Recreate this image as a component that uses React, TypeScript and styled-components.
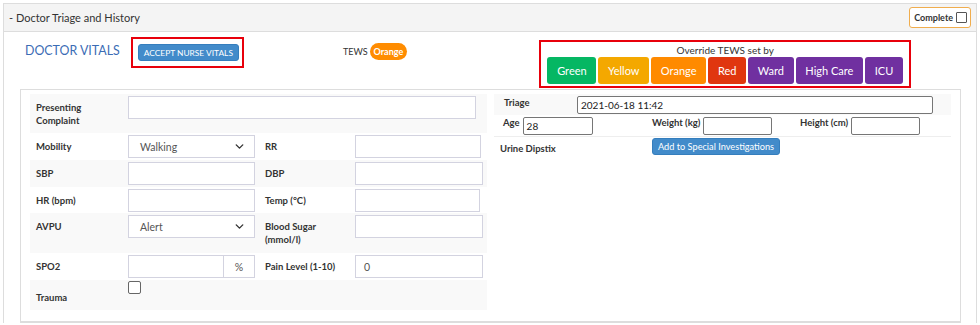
import * as React from 'react'
import styled, { createGlobalStyle } from 'styled-components'
import { ChevronDown } from 'lucide-react'

const GlobalStyle = createGlobalStyle`
  body {
    margin: 0;
    background: #fff;
    font-family: Lato, "Noto Sans", sans-serif;
    color: #333;
  }
`

const Panel = styled.div`
  margin: 3px 3px 0 3px;
  border: 1px solid #ddd;
  border-bottom: none;
`

const PanelHeader = styled.div`
  height: 27px;
  display: flex;
  align-items: center;
  justify-content: space-between;
  padding: 0 5px;
  background: #f4f4f4;
  border-bottom: 1px solid #ddd;
  font-size: 11px;
`

const CompleteButton = styled.label`
  display: flex;
  align-items: center;
  gap: 3px;
  height: 19px;
  padding: 0 3px 0 4px;
  border: 1px solid #f0ad4e;
  border-radius: 3px;
  background: #fff;
  font-size: 9px;
  font-weight: 700;
  color: #333;
`

const Box = styled.span`
  display: inline-block;
  width: 9px;
  height: 9px;
  border: 1px solid #555;
  border-radius: 1px;
  background: #fff;
`

const PanelBody = styled.div`
  padding: 0 15px 0 16px;
`

const TopRow = styled.div`
  height: 57px;
  display: flex;
  align-items: flex-start;
  & > * {
    flex-shrink: 0;
  }
`

const Title = styled.div`
  margin: 11px 0 0 5px;
  font-size: 12.4px;
  color: #3b6cb5;
  white-space: nowrap;
`

const Highlight = styled.div`
  margin: 5px 0 0 11px;
  border: 2px solid #e8000b;
  padding: 5px 3px 5px 5px;
`

const BlueButton = styled.button<{ $upper?: boolean }>`
  display: block;
  font-family: inherit;
  font-size: ${p => (p.$upper ? '8.4px' : '9.2px')};
  color: #fff;
  background: #428bca;
  border: 1px solid #357ebd;
  border-radius: 3px;
  height: 17px;
  padding: 0 5px;
  text-transform: ${p => (p.$upper ? 'uppercase' : 'none')};
  white-space: nowrap;
`

const Tews = styled.div`
  margin: 11px 0 0 99px;
  display: flex;
  align-items: center;
  gap: 2px;
  font-size: 9px;
`

const Badge = styled.span`
  background: #ff8c00;
  color: #fff;
  font-weight: 700;
  font-size: 9px;
  border-radius: 9px;
  padding: 0 4px;
  height: 17px;
  display: inline-flex;
  align-items: center;
`

const Override = styled.div`
  margin: 8px 50px 0 auto;
  border: 2px solid #e8000b;
  padding: 2px 6px 2px 6px;
  display: flex;
  flex-direction: column;
  align-items: center;
  gap: 1px;
  font-size: 10px;
  white-space: nowrap;
`

const TewsButtons = styled.div`
  display: flex;
  gap: 2px;
`

const TewsButton = styled.button<{ $bg: string }>`
  font-family: inherit;
  font-size: 11px;
  color: #fff;
  background: ${p => p.$bg};
  border: none;
  border-radius: 3px;
  height: 27px;
  padding: 0 9.7px;
  white-space: nowrap;
`

const Inner = styled.div`
  border: 1px solid #ddd;
  border-bottom-width: 2px;
  padding: 4px 9px 11px 9px;
  display: grid;
  grid-template-columns: 457px 1fr;
  column-gap: 7px;
  align-items: start;
`

const Row = styled.div<{ $stripe?: boolean; $h: number }>`
  display: grid;
  grid-template-columns: 98px 131px 96px 1fr;
  align-items: start;
  height: ${p => p.$h}px;
  background: ${p => (p.$stripe ? '#f9f9f9' : '#fff')};
`

const Label = styled.div<{ $top?: number }>`
  padding: ${p => p.$top ?? 7}px 6px 0 6px;
  font-size: 9.5px;
  font-weight: 700;
  line-height: 13px;
  color: #333;
`

const Cell = styled.div<{ $span?: number }>`
  padding-top: 2px;
  grid-column: span ${p => p.$span ?? 1};
`

const Input = styled.div<{ $w: number }>`
  box-sizing: border-box;
  width: ${p => p.$w}px;
  height: 23px;
  border: 1px solid #d3d3e0;
  background: #fff;
  display: flex;
  align-items: center;
  justify-content: space-between;
  padding: 0 8px 0 11px;
  font-size: 10.5px;
  color: #555;
`

const Group = styled.div`
  display: flex;
  width: 127px;
`

const Addon = styled.div`
  box-sizing: border-box;
  width: 31px;
  height: 23px;
  border: 1px solid #d3d3e0;
  border-left: none;
  display: flex;
  align-items: center;
  justify-content: center;
  font-size: 10.5px;
  color: #555;
`

const Check = styled.span`
  display: block;
  width: 11px;
  height: 11px;
  border: 1px solid #666;
  border-radius: 2px;
  margin-top: -1px;
  background: #fff;
`

const Side = styled.div`
  display: flex;
  flex-direction: column;
`

const TriageRow = styled.div`
  display: grid;
  grid-template-columns: 83px 1fr;
  background: #f9f9f9;
  height: 21px;
  padding-right: 18px;
  align-items: center;
`

const SideLabel = styled.span<{ $pad?: number }>`
  padding-left: ${p => p.$pad ?? 0}px;
  font-size: 9.5px;
  font-weight: 700;
  color: #333;
  white-space: nowrap;
`

const Field = styled.div<{ $w?: number }>`
  box-sizing: border-box;
  width: ${p => (p.$w ? `${p.$w}px` : '100%')};
  height: 18px;
  border: 1px solid #767676;
  border-radius: 2px;
  background: #fff;
  font-size: 10px;
  color: #222;
  padding: 0 3px;
  display: flex;
  align-items: center;
`

const MeasureRow = styled.div`
  display: grid;
  grid-template-columns: 158px 148px 1fr;
  height: 21px;
  border-bottom: 1px solid #eee;
  align-items: center;
`

const Measure = styled.div<{ $pad?: number }>`
  display: flex;
  align-items: flex-start;
  gap: 3px;
  padding-left: ${p => p.$pad ?? 0}px;
`

const DipRow = styled.div`
  display: grid;
  grid-template-columns: 158px 1fr;
  padding-top: 1px;
  align-items: start;
  & > span {
    padding-top: 5px;
  }
`

const tewsLevels = [
  { name: 'Green', bg: '#05b763' },
  { name: 'Yellow', bg: '#f4a800' },
  { name: 'Orange', bg: '#ff8a00' },
  { name: 'Red', bg: '#e0360f' },
  { name: 'Ward', bg: '#7030a0' },
  { name: 'High Care', bg: '#7030a0' },
  { name: 'ICU', bg: '#7030a0' },
]

const Chevron = () => <ChevronDown size={13} strokeWidth={2.6} color="#333" />

export default function App() {
  return (
    <>
      <GlobalStyle />
      <Panel>
        <PanelHeader>
          <span>- Doctor Triage and History</span>
          <CompleteButton>
            Complete <Box />
          </CompleteButton>
        </PanelHeader>
        <PanelBody>
          <TopRow>
            <Title>DOCTOR VITALS</Title>
            <Highlight>
              <BlueButton $upper>Accept Nurse Vitals</BlueButton>
            </Highlight>
            <Tews>
              TEWS <Badge>Orange</Badge>
            </Tews>
            <Override>
              <span>Override TEWS set by</span>
              <TewsButtons>
                {tewsLevels.map(level => (
                  <TewsButton key={level.name} $bg={level.bg}>{level.name}</TewsButton>
                ))}
              </TewsButtons>
            </Override>
          </TopRow>
          <Inner>
            <div>
              <Row $stripe $h={39}>
                <Label>Presenting Complaint</Label>
                <Cell $span={3}><Input $w={348} /></Cell>
              </Row>
              <Row $h={27}>
                <Label>Mobility</Label>
                <Cell>
                  <Input $w={127}>Walking<Chevron /></Input>
                </Cell>
                <Label>RR</Label>
                <Cell><Input $w={126} /></Cell>
              </Row>
              <Row $stripe $h={27}>
                <Label>SBP</Label>
                <Cell><Input $w={127} /></Cell>
                <Label>DBP</Label>
                <Cell><Input $w={128} /></Cell>
              </Row>
              <Row $h={26}>
                <Label>HR (bpm)</Label>
                <Cell><Input $w={127} /></Cell>
                <Label>Temp (°C)</Label>
                <Cell><Input $w={125} /></Cell>
              </Row>
              <Row $stripe $h={40}>
                <Label>AVPU</Label>
                <Cell>
                  <Input $w={127}>Alert<Chevron /></Input>
                </Cell>
                <Label>Blood Sugar (mmol/l)</Label>
                <Cell><Input $w={128} /></Cell>
              </Row>
              <Row $h={27}>
                <Label>SPO2</Label>
                <Cell>
                  <Group>
                    <Input $w={96} />
                    <Addon>%</Addon>
                  </Group>
                </Cell>
                <Label>Pain Level (1-10)</Label>
                <Cell><Input $w={128} style={{ paddingLeft: 8 }}>0</Input></Cell>
              </Row>
              <Row $stripe $h={30}>
                <Label $top={11}>Trauma</Label>
                <Cell><Check /></Cell>
              </Row>
            </div>
            <Side>
              <TriageRow>
                <SideLabel $pad={10} style={{ marginTop: -4 }}>Triage</SideLabel>
                <Field>2021-06-18 11:42</Field>
              </TriageRow>
              <MeasureRow>
                <Measure $pad={9}>
                  <SideLabel>Age</SideLabel>
                  <Field $w={70}>28</Field>
                </Measure>
                <Measure>
                  <SideLabel>Weight (kg)</SideLabel>
                  <Field $w={69} />
                </Measure>
                <Measure>
                  <SideLabel>Height (cm)</SideLabel>
                  <Field $w={69} />
                </Measure>
              </MeasureRow>
              <DipRow>
                <SideLabel $pad={6}>Urine Dipstix</SideLabel>
                <div>
                  <BlueButton>Add to Special Investigations</BlueButton>
                </div>
              </DipRow>
            </Side>
          </Inner>
        </PanelBody>
      </Panel>
    </>
  )
}
